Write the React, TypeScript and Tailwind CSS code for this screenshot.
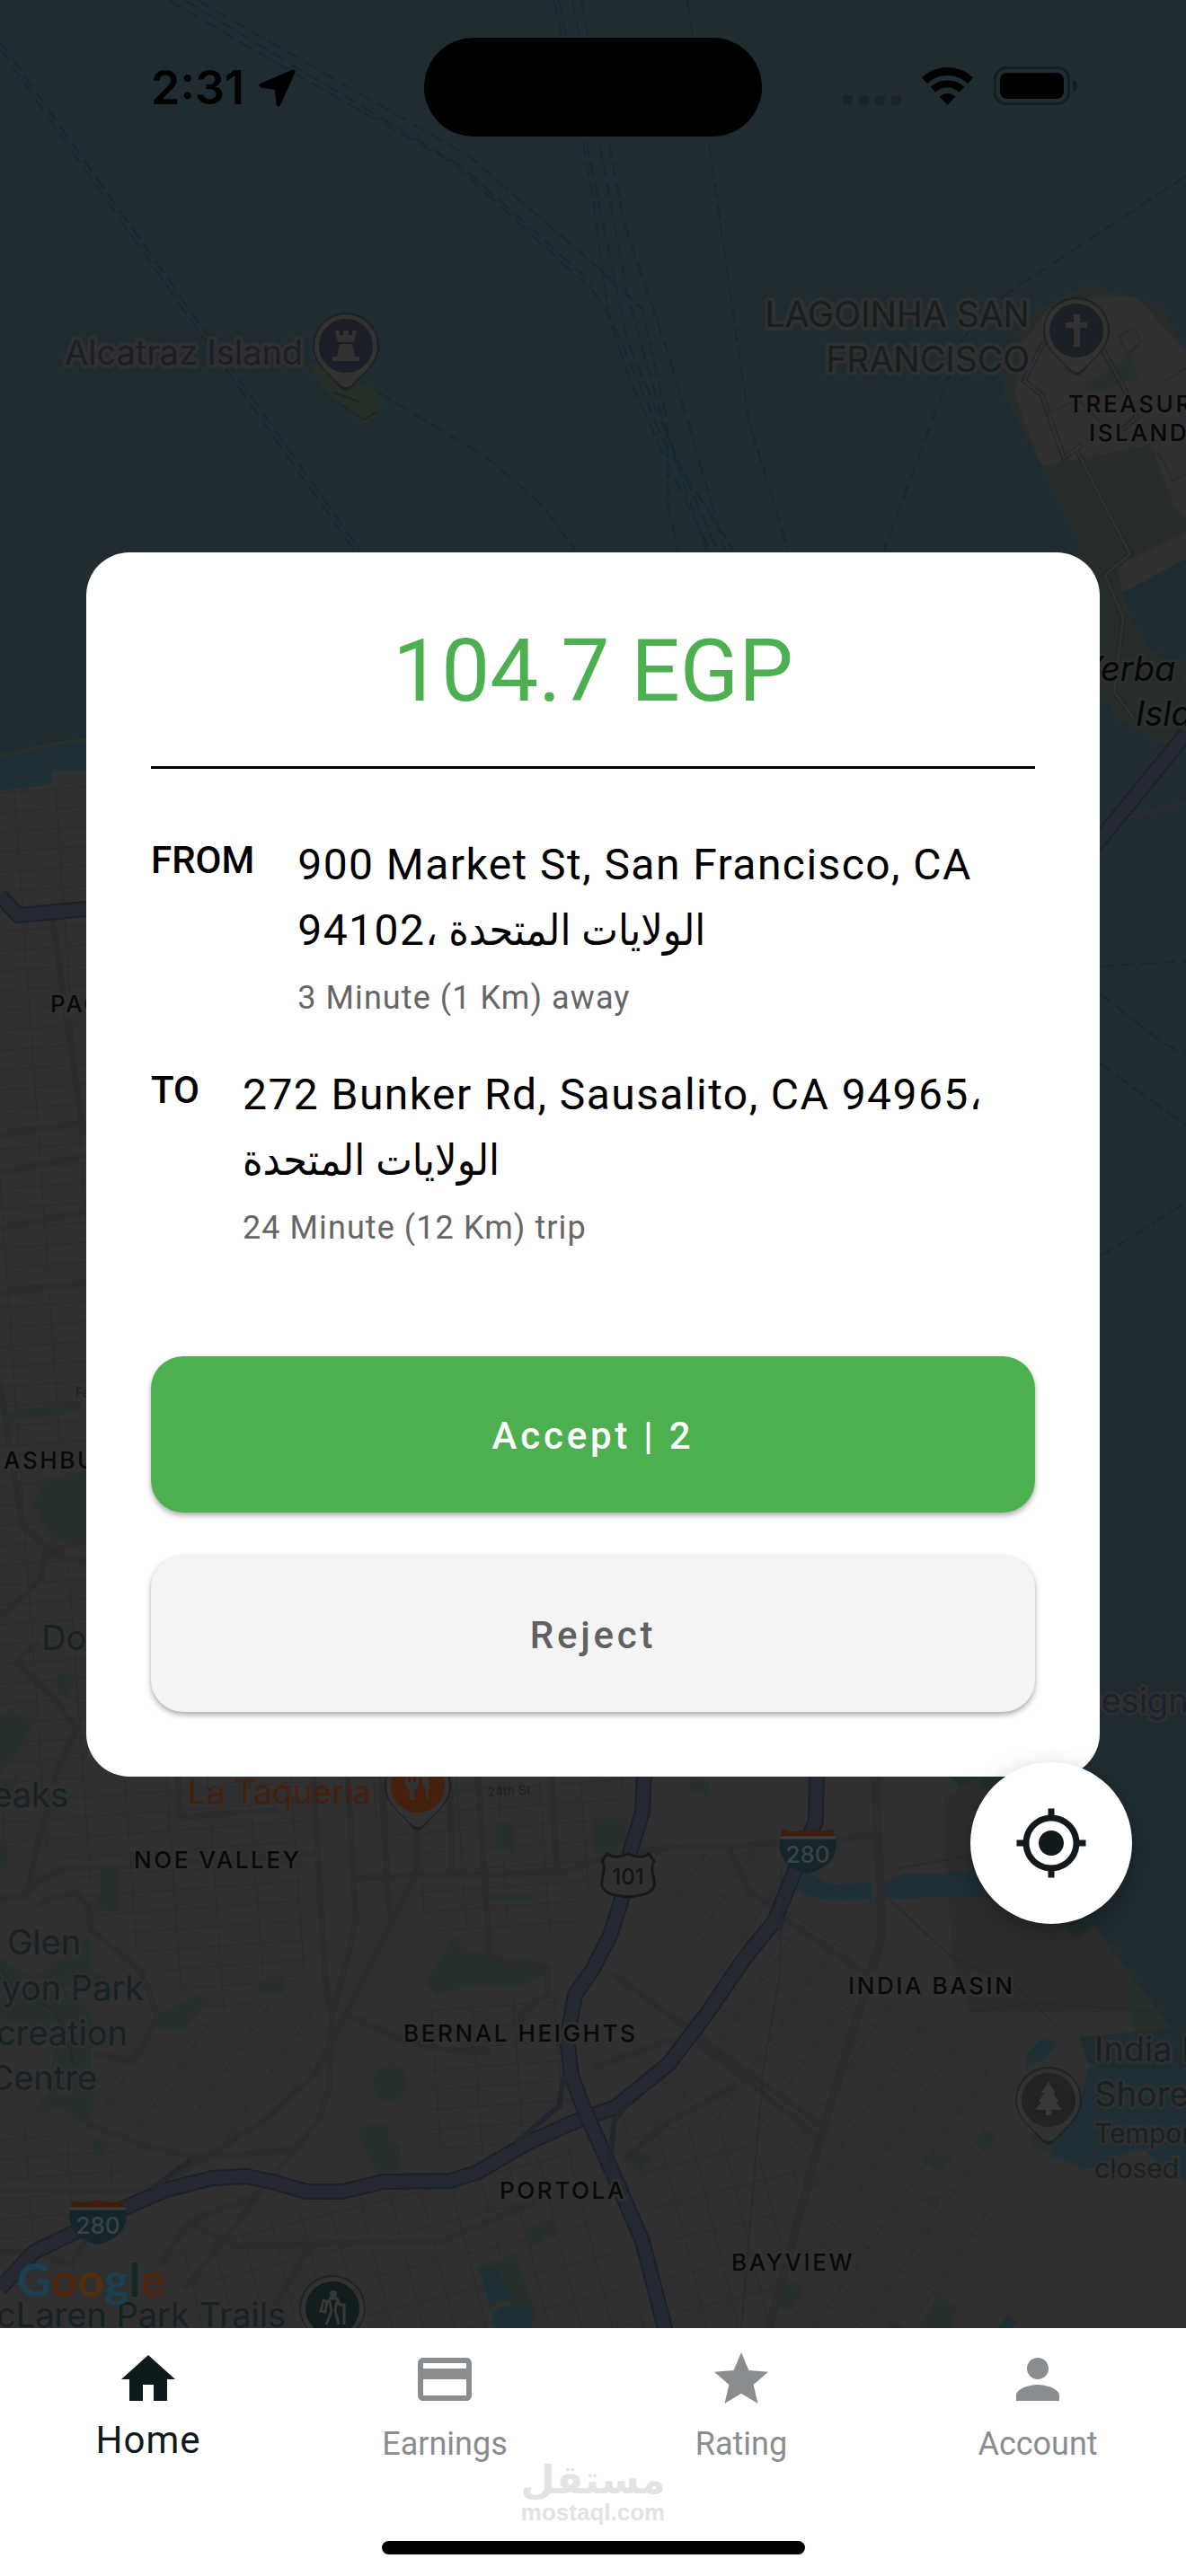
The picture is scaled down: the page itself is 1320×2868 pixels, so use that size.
import { useState } from 'react'
import { MdGpsFixed, MdHome, MdPayment, MdPerson, MdStar } from 'react-icons/md'
import type { IconType } from 'react-icons'

type Stop = {
  label:   string
  address: string
  detail:  string
}

type Tab = {
  id:    string
  label: string
  icon:  IconType
}

const STOPS: Stop[] = [
  { label: 'FROM', address: '900 Market St, San Francisco, CA 94102، الولايات المتحدة', detail: '3 Minute (1 Km) away' },
  { label: 'TO',   address: '272 Bunker Rd, Sausalito, CA 94965، الولايات المتحدة',     detail: '24 Minute (12 Km) trip' },
]

const TABS: Tab[] = [
  { id: 'home',     label: 'Home',     icon: MdHome },
  { id: 'earnings', label: 'Earnings', icon: MdPayment },
  { id: 'rating',   label: 'Rating',   icon: MdStar },
  { id: 'account',  label: 'Account',  icon: MdPerson },
]

const FERRY_LINES = [
  '0,46 229,370 400,612',
  '0,54 225,374 394,612',
  '187,0 337,87 505,182 660,324 676,348 700,420 740,510 790,612',
  '205,0 512,184 660,316',
  '219,0 522,174 660,293 715,344 742,467 744,569 755,612',
  '617,0 648,152 660,221 677,348 740,494 816,612',
  '622,0 655,170 698,380 798,612',
  '637,0 666,152 698,328 740,475 786,612',
  '647,0 677,154 694,245 744,395 807,612',
  '765,0 788,152 833,467 877,612',
  '421,437 543,510 602,561 640,612',
  '1320,196 1119,328 1072,376 984,612',
  '1224,1076 1320,1070',
  '1224,1106 1295,1162 1320,1174',
  '1224,1184 1320,1253',
  '1224,1399 1320,1339',
]

const ROADS = [
  '349,1978 358,2144 364,2221 370,2246',
  '387,1978 396,2136 389,2172 370,2242 366,2278 349,2311 295,2360 231,2401 168,2438',
  '463,2033 463,2087 436,2140 385,2242 368,2278 366,2327 354,2360 328,2393 248,2495 206,2548',
  '394,2091 631,2084 660,2072 727,2059 870,2052 976,2043',
  '0,2115 27,2111 42,2095 76,2078 143,2078 350,2064',
  '42,2119 84,2107 99,2123 101,2148 156,2193 175,2242 168,2262 147,2295 105,2287',
  '63,1978 53,2013 42,2054 29,2111',
  '97,2364 160,2389 223,2403 328,2393',
  '0,2438 160,2438',
  '0,2507 40,2507 78,2522 98,2490',
  '290,2442 210,2474 177,2523',
  '210,2474 261,2501 492,2495 598,2450',
  '345,2500 305,2570',
  '198,1978 200,2023 310,2015',
  '425,1978 432,2120 437,2140',
  '500,1978 503,2087',
  '532,1978 545,2180 610,2190 610,2220 580,2240 580,2262',
  '614,1978 620,2084',
  '385,2242 445,2270 490,2282 545,2284',
  '812,2059 833,2105 875,2137 963,2197',
  '681,2197 769,2261 921,2371',
  '769,2268 915,2383',
  '660,2302 757,2268',
  '694,2403 748,2360 820,2321',
  '58,1020 93,1264',
  '0,1264 96,1249',
  '0,1305 96,1287',
  '0,1367 96,1349',
  '0,1440 96,1428',
  '0,1540 25,1700 60,1727 96,1715',
  '96,1740 50,1728 45,1760 0,1800',
  '42,1828 18,1850 60,1890 85,1925 60,1978',
]

const HIGHWAYS = [
  '0,2548 38,2507 84,2485 139,2458 185,2438 236,2425 274,2423 303,2429 341,2440 381,2440 427,2429 501,2428 530,2419 589,2385 640,2362 685,2346 744,2298 786,2243 828,2181 862,2139 883,2087 908,2027 909,1970',
  '717,1970 715,2018 702,2059 692,2114 679,2155 660,2192 640,2221 631,2270 636,2311 650,2348 685,2426 715,2495 742,2600',
  '0,997 20,1019 96,1012',
  '1210,952 1320,817',
]

const PARKS = [
  '507,2154 516,2170 543,2172 551,2180 589,2180 610,2197 577,2213 526,2209 486,2221 474,2209 488,2184',
  '408,2363 431,2363 433,2385 446,2387 444,2417 421,2419 398,2376',
  '288,2203 318,2200 316,2219 288,2218',
  '112,2080 131,2080 131,2128 103,2127 112,2111',
  '177,2242 219,2221 234,2227 206,2258 173,2260',
  '0,2180 38,2201 67,2180 101,2156 101,2193 118,2201 72,2213 101,2242 103,2352 93,2368 72,2348 38,2352 55,2327 59,2282 0,2246',
  '553,2029 572,2029 572,2062 553,2062',
  '543,2109 591,2106 591,2116 543,2117',
  '585,2480 615,2470 620,2492 606,2488 604,2496 590,2500',
  '528,2524 573,2509 598,2584 560,2560',
  '104,2378 120,2384 114,2400 104,2398',
  '0,1978 20,1978 8,2010 0,2014',
  '0,2050 9,2060 8,2078 0,2080',
  '1251,2188 1304,2259 1260,2263',
  '1085,2385 1096,2373 1107,2380 1098,2396',
  '1024,2403 1062,2399 1043,2419',
  '1024,2449 1046,2442 1045,2463',
  '697,2405 708,2394 725,2403 713,2419',
  '866,2568 875,2539 894,2550 879,2575',
  '1018,2600 1043,2557 1066,2568 1056,2600',
  '660,2025 698,2025 696,2050 676,2068 660,2060',
  '768,1978 790,1984 788,2000 768,1994',
  '5,1572 90,1560 90,1571 5,1583',
  '37,1676 50,1646 96,1638 96,1712 60,1715',
  '64,1863 83,1866 76,1892 64,1884',
  '0,1910 14,1903 36,1920 24,1944 0,1974',
  '1150,2360 1180,2390 1172,2404 1148,2386',
]

const WATERS = [
  '894,2082 925,2098 971,2096 971,2114 925,2117 883,2105',
  '984,2096 1005,2087 1085,2084 1110,2110 984,2114',
  '1161,2268 1175,2275 1165,2291 1142,2302 1144,2286',
  '1212,2300 1320,2304 1320,2430 1270,2392 1210,2415 1172,2400 1185,2360 1205,2330',
  '534,2527 551,2525 560,2542 575,2556 545,2569',
  '547,2576 560,2568 589,2566 593,2600 551,2600',
  '990,2592 988,2585 1005,2592',
  '1110,2592 1122,2577 1132,2586 1126,2592',
]

const area = 'fill-[#162226] stroke-[#303030] stroke-[6px] text-[38px] [paint-order:stroke] [stroke-linejoin:round]'
const district = 'fill-[#08090a] stroke-[#303030] stroke-[6px] text-[26px] font-medium tracking-widest [paint-order:stroke] [stroke-linejoin:round]'

function Pin({ x, y, fill, children }: { x: number; y: number; fill: string; children: React.ReactNode }) {
  return (
    <g transform={`translate(${x} ${y})`}>
      <path d="M0 50C-5 50-9 44-14 38C-24 28-37 17-37 0A37 37 0 0 1 37 0C37 17 24 28 14 38C9 44 5 50 0 50Z" fill="#171b1d" opacity=".6" />
      <path d="M0 46C-5 46-9 41-14 36C-23 27-35 17-35 0A35 35 0 0 1 35 0C35 17 23 27 14 36C9 41 5 46 0 46Z" fill="#323232" />
      <circle r="30" fill={fill} />
      {children}
    </g>
  )
}

function InterstateShield({ x, y, route }: { x: number; y: number; route: string }) {
  return (
    <g transform={`translate(${x} ${y})`}>
      <path d="M-31 11V14C-34 30-24 44 0 50C24 44 34 30 31 14V11Z" fill="#14262c" />
      <path d="M-30 9L-28 0C-20 5-10 3 0 0C10 3 20 5 28 0L30 9Z" fill="#3f1d0c" />
      <path d="M-31 10H31" stroke="#3a3c3d" strokeWidth="3" />
      <text y="38" textAnchor="middle" className="fill-[#3a4346] text-[26px] font-medium">{route}</text>
    </g>
  )
}

function CityMap() {
  return (
    <svg
      viewBox="0 0 1320 2592"
      preserveAspectRatio="xMidYMid slice"
      aria-label="Map of San Francisco"
      className="absolute inset-0 size-full font-[Inter,sans-serif]"
    >
      <defs>
        <pattern id="blocks" width="46" height="22" patternUnits="userSpaceOnUse" patternTransform="rotate(-4)">
          <path d="M0 0H46M0 0V22" stroke="#2a2a2b" strokeWidth="2" fill="none" />
        </pattern>
        <pattern id="diagonal" width="44" height="26" patternUnits="userSpaceOnUse" patternTransform="rotate(34)">
          <path d="M0 0H44M0 0V26" stroke="#2a2a2b" strokeWidth="2" fill="none" />
        </pattern>
        <pattern id="slanted" width="34" height="40" patternUnits="userSpaceOnUse" patternTransform="rotate(-14)">
          <path d="M0 0H34M0 0V40" stroke="#2a2a2b" strokeWidth="2" fill="none" />
        </pattern>
      </defs>

      <rect width="1320" height="2592" fill="#1f2c31" />
      <path d="M0 838L40 832L96 824V872L0 880Z" fill="#1e2f37" />
      <path d="M0 842L60 828L96 824" stroke="#2b302c" strokeWidth="4" fill="none" />

      {/* mainland */}
      <path
        d="M0 880L58 873V858H96L600 900L1050 1400L1058 1978L1068 1990L1190 2150L1200 2157L1218 2144L1304 2259L1201 2268L1211 2298L1258 2307L1250 2316L1320 2302V2592H0Z"
        fill="#303030"
      />
      <path d="M1050 2000L1090 1978L1190 2150L1200 2157L1218 2144L1251 2190L1258 2240L1080 2240L1060 2180Z" fill="#2d2d2d" />
      <path d="M0 880L96 872V1978L340 1978V2200L240 2250L110 2130L60 2060L0 2060Z" fill="url(#blocks)" />
      <path d="M380 1978H700L640 2150L480 2150L440 2060Z" fill="url(#blocks)" />
      <path d="M480 2225H620L640 2340L540 2400L470 2390Z" fill="url(#blocks)" />
      <path d="M110 2290L340 2210L360 2300L240 2400L120 2370Z" fill="url(#diagonal)" />
      <path d="M0 2360L150 2400L100 2470L0 2500Z" fill="url(#blocks)" />
      <path d="M200 2500L400 2445L640 2390L720 2592H200Z" fill="url(#slanted)" />
      <path d="M720 2060L870 2060L960 2200L900 2400L720 2330L800 2200Z" fill="url(#diagonal)" />
      <path d="M690 2350L900 2400L850 2592H760Z" fill="url(#slanted)" />
      <path d="M960 2200L1100 2280L1110 2480L1010 2592H870Z" fill="url(#diagonal)" />

      {PARKS.map(points => <polygon key={points} points={points} fill="#27302b" />)}
      <ellipse cx="434" cy="2319" rx="19" ry="22" fill="#27302b" />
      {WATERS.map(points => <polygon key={points} points={points} fill="#1e2f37" />)}
      <path d="M0 2190C12 2215 30 2225 50 2232C70 2245 78 2270 81 2300" stroke="#1c2d36" strokeWidth="2" fill="none" />

      {/* Treasure Island and Yerba Buena */}
      <path
        d="M1115 433L1136 368L1157 344L1209 316L1291 340L1320 389V623L1249 660L1262 697L1279 720L1304 737L1320 733V832L1291 828L1245 800L1200 740V600Z"
        fill="#272e2a"
      />
      <path d="M1130 440L1136 385L1165 345L1209 332L1265 330L1320 392V578L1305 560L1282 495L1159 519Z" fill="#303030" />
      <path d="M1243 630L1320 592V622L1249 660Z" fill="#303030" />
      <path d="M1205 430L1258 395L1268 420L1212 440Z" fill="#27302b" />
      <path d="M1162 380L1140 424L1160 440L1184 510L1204 495M1198 500L1228 560L1258 617L1230 640L1250 688L1240 770L1262 800M1225 385L1250 430L1265 465L1235 490" stroke="#24262e" strokeWidth="6" fill="none" />
      <path d="M1162 380L1140 424L1160 440L1184 510L1204 495M1198 500L1228 560L1258 617L1230 640L1250 688L1240 770L1262 800M1225 385L1250 430L1265 465L1235 490" stroke="#303030" strokeWidth="3" fill="none" />
      <path d="M1245 375L1262 365L1270 380L1255 395ZM1165 460L1200 445L1225 470M1295 425L1320 410M1287 500L1305 535L1320 528" stroke="#2a2a2b" strokeWidth="2" fill="none" />
      <path d="M1247 913L1320 893" stroke="#2a2c2d" strokeWidth="3" />

      {/* Alcatraz */}
      <path d="M345 405L350 418L362 435L375 447L406 472L421 461L427 447L417 433L400 425L360 400Z" fill="#272f29" />
      <path d="M373 437L401 448M378 449L405 467L421 458" stroke="#1e2524" strokeWidth="2" fill="none" />

      {FERRY_LINES.map(points => (
        <polyline key={points} points={points} fill="none" stroke="#162730" strokeWidth="2" strokeDasharray="16 7" />
      ))}
      {ROADS.map(points => (
        <polyline key={points} points={points} fill="none" stroke="#2b2c2e" strokeWidth="7" strokeLinejoin="round" />
      ))}
      <path d="M974 1978L979 2090L982 2155L913 2380L854 2600" stroke="#2b2c2e" strokeWidth="10" fill="none" />
      <path d="M870 2080L868 2200L850 2300L825 2592M985 2110L1060 2180L1130 2210L1170 2250M1000 2080L1085 2065M1080 2240L1150 2230L1300 2240" stroke="#292a2b" strokeWidth="2" fill="none" />
      {HIGHWAYS.map(points => (
        <g key={points} fill="none" strokeLinejoin="round">
          <polyline points={points} stroke="#1c2028" strokeWidth="18" />
          <polyline points={points} stroke="#242833" strokeWidth="14" />
        </g>
      ))}
      <path d="M628 2310L622 2345L575 2385M676 2425L684 2360L700 2340M168 2438L212 2405M868 2150L874 2110" stroke="#22262f" strokeWidth="6" fill="none" />

      <text x="72" y="406" className="fill-[#1c1f29] stroke-[#303030] stroke-[8px] text-[38px] [paint-order:stroke] [stroke-linejoin:round]">Alcatraz Island</text>
      <g textAnchor="end" className="fill-[#151e21] stroke-[#303030] stroke-[8px] text-[39px] [paint-order:stroke] [stroke-linejoin:round]">
        <text x="1146" y="364">LAGOINHA SAN</text>
        <text x="1146" y="414">FRANCISCO</text>
      </g>
      <g className={district}>
        <text x="1189" y="459">TREASURE</text>
        <text x="1212" y="491">ISLAND</text>
        <text x="56" y="1127">PACIFIC</text>
        <text x="4" y="1635">ASHBURY</text>
        <text x="149" y="2080">NOE VALLEY</text>
        <text x="449" y="2273">BERNAL HEIGHTS</text>
        <text x="556" y="2448">PORTOLA</text>
        <text x="944" y="2220">INDIA BASIN</text>
        <text x="814" y="2528">BAYVIEW</text>
      </g>
      <g className="fill-[#060707] stroke-[#2c302d] stroke-[6px] text-[38px] italic [paint-order:stroke]">
        <text x="1202" y="758">Yerba Buena</text>
        <text x="1264" y="808">Island</text>
      </g>
      <g className={area}>
        <text x="46" y="1837">Dolores</text>
        <text x="8" y="2176">Glen</text>
        <g textAnchor="end">
          <text x="76" y="2012">Peaks</text>
          <text x="160" y="2227">Canyon Park</text>
          <text x="142" y="2277">Recreation</text>
          <text x="108" y="2327">Centre</text>
          <text x="318" y="2591">McLaren Park Trails</text>
        </g>
        <text x="1198" y="1907" className="fill-[#1c2230]">Design</text>
        <text x="1218" y="2295">India Basin</text>
        <text x="1218" y="2345">Shoreline</text>
      </g>
      <g className="fill-[#162226] stroke-[#303030] stroke-[6px] text-[30px] [paint-order:stroke]">
        <text x="1218" y="2386">Temporarily</text>
        <text x="1218" y="2425">closed</text>
      </g>
      <text x="209" y="2008" className="fill-[#45200d] text-[37px]">La Taqueria</text>
      <g className="fill-[#1c202a] text-[14px]">
        <text x="543" y="2000" transform="rotate(-3 543 2000)">24th St</text>
        <text x="84" y="1556">Fell St</text>
      </g>

      <Pin x={385} y={385} fill="#1c1e27">
        <path d="M-12-17H-7V-12H-3V-17H3V-12H7V-17H12L9-4H-9ZM-7-2H7L10 12H15V17H-15V12H-10Z" fill="#323232" />
      </Pin>
      <Pin x={1198} y={368} fill="#1a2025">
        <path d="M-3-18H4V-9H12V-3H4V18H-3V-3H-12V-9H-3Z" fill="#323232" />
      </Pin>
      <Pin x={465} y={1988} fill="#45200d">
        <path d="M-14-14V-4C-14 2-10 4-9 5V16H-4V5C-1 4 1 2 1-4V-14H-2V-4H-5V-14H-8V-4H-11V-14ZM5 2V-10C5-13 8-15 12-15V16H9V2Z" fill="#323232" />
      </Pin>
      <Pin x={1167} y={2338} fill="#232323">
        <path d="M0-20L8-8H5L11 2H8L15 11H3V17H-3V11H-15L-8 2H-11L-5-8H-8Z" fill="#383838" />
      </Pin>
      <Pin x={370} y={2570} fill="#121d1e">
        <circle cx="1" cy="-16" r="4" fill="#383838" />
        <path d="M-4-11H5L8-4H13V18M-4-10L-1 3L-7 18M5-8L3 3L7 18M-10-9L-13 3L-8 4L-6-8Z" stroke="#383838" strokeWidth="3" fill="none" />
      </Pin>

      <InterstateShield x={109} y={2449} route="280" />
      <InterstateShield x={899} y={2036} route="280" />
      <path d="M676 2064C682 2069 690 2068 699 2064C708 2068 716 2069 722 2064L728 2072C722 2080 730 2092 728 2100C724 2110 712 2110 699 2112C686 2110 674 2110 670 2100C668 2092 676 2080 670 2072Z" fill="#303030" stroke="#14191b" strokeWidth="3" />
      <text x="699" y="2098" textAnchor="middle" className="fill-[#111314] text-[24px] font-medium">101</text>

      <text x="19" y="2557" className="text-[52px] font-[Lato,sans-serif] font-bold">
        <tspan className="fill-[#1c4052]">G</tspan>
        <tspan className="fill-[#52250f]">o</tspan>
        <tspan className="fill-[#52300f]">o</tspan>
        <tspan className="fill-[#1c4052]">g</tspan>
        <tspan className="fill-[#142728]">l</tspan>
        <tspan className="fill-[#52250f]">e</tspan>
      </text>
    </svg>
  )
}

function StatusBar() {
  return (
    <header className="relative z-10 grid grid-cols-[1fr_auto_1fr] items-start px-30 pt-[42px]">
      <div className="flex items-center gap-4 pl-12 pt-7 text-black">
        <time className="font-[Inter,sans-serif] text-[52px] leading-14 font-semibold">2:31</time>
        <svg viewBox="0 0 44 44" className="size-[42px]" aria-hidden="true">
          <path d="M40 3L3 19L21 22L23 41Z" fill="black" stroke="black" strokeWidth="5" strokeLinejoin="round" />
        </svg>
      </div>
      <div className="h-[110px] w-[376px] rounded-full bg-black" />
      <div className="flex items-end justify-end gap-[23px] pt-8">
        <div className="flex gap-[7px]">
          {[0, 1, 2, 3].map(i => <span key={i} className="size-[11px] rounded-sm bg-[#1c212c]" />)}
        </div>
        <svg viewBox="0 0 57 42" className="h-[42px] w-[57px]" aria-label="Wi-Fi">
          <path d="M2.9 14.6A37.5 37.5 0 0 1 54.1 14.6" stroke="black" strokeWidth="9" fill="none" />
          <path d="M12.5 24.8A23.5 23.5 0 0 1 44.5 24.8" stroke="black" strokeWidth="8" fill="none" />
          <path d="M19.6 32.5A13 13 0 0 1 37.4 32.5L28.5 42Z" fill="black" />
        </svg>
        <svg viewBox="0 0 94 43" className="h-[43px] w-[94px]" aria-label="Battery">
          <rect x="1.5" y="1.5" width="82" height="40" rx="12" fill="none" stroke="#141d20" strokeWidth="3" />
          <rect x="7" y="7" width="71" height="29" rx="8" fill="black" />
          <path d="M88 15C92 16 93 19 93 21.500C93 24 92 27 88 28Z" fill="#141d20" />
        </svg>
      </div>
    </header>
  )
}

function StopRow({ stop }: { stop: Stop }) {
  return (
    <div className="flex gap-12">
      <dt className="text-[42px] leading-16 font-medium">{stop.label}</dt>
      <dd className="flex-1">
        <p className="text-5xl leading-[73px] tracking-[0.03em]">{stop.address}</p>
        <p className="mt-3 text-4xl leading-[54px] tracking-[0.03em] text-[#666666]">{stop.detail}</p>
      </dd>
    </div>
  )
}

function TripDialog() {
  return (
    <section role="dialog" aria-label="Trip request" className="relative z-10 w-full rounded-[48px] bg-white p-[72px] text-black">
      <h1 className="border-b-3 border-black pb-[46px] text-center text-8xl leading-[120px] font-normal text-[#4caf50]">
        104.7 EGP
      </h1>
      <dl className="mt-[70px] flex flex-col gap-11">
        {STOPS.map(stop => <StopRow key={stop.label} stop={stop} />)}
      </dl>
      <div className="mt-29 flex flex-col gap-12">
        <button type="button" className="h-[174px] rounded-[36px] bg-[#4caf50] pt-1 text-[42px] font-medium tracking-[0.09em] text-white shadow-[0_3px_6px_rgba(0,0,0,0.35)]">
          Accept | 2
        </button>
        <button type="button" className="h-[174px] rounded-[36px] bg-[#f4f4f4] pt-1 text-[42px] font-medium tracking-[0.09em] text-[#616161] shadow-[0_3px_6px_rgba(0,0,0,0.35)]">
          Reject
        </button>
      </div>
    </section>
  )
}

export default function App() {
  const [active, setActive] = useState('home')

  return (
    <div className="flex min-h-screen flex-col bg-white font-[Roboto,'DejaVu_Sans_Condensed','DejaVu_Sans',sans-serif]">
      <main className="relative flex flex-1 flex-col overflow-hidden">
        <CityMap />
        <StatusBar />
        {/* bottom padding mirrors the status bar so the dialog sits in the middle */}
        <div className="flex flex-1 items-center px-24 pb-[152px]">
          <TripDialog />
        </div>
        <button
          type="button"
          aria-label="Centre on my location"
          className="absolute right-[60px] bottom-[450px] z-20 flex size-[180px] items-center justify-center rounded-full bg-white text-[#101a1d] shadow-[0_12px_30px_rgba(0,0,0,0.3)]"
        >
          <MdGpsFixed className="size-21" />
        </button>
      </main>

      <footer className="flex h-[276px] shrink-0 flex-col items-center bg-white">
        <nav className="grid w-full grid-cols-4 items-start pt-[21px]">
          {TABS.map(({ id, label, icon: Icon }) => (
            <button
              key={id}
              type="button"
              onClick={() => setActive(id)}
              className={active === id
                ? 'flex flex-col items-center gap-2 text-[42px] leading-12 tracking-[1px] text-[#0f1a1d]'
                : 'flex flex-col items-center gap-3 text-4xl leading-12 text-[#8a8d8f]'}
            >
              <Icon className="size-18" />
              {label}
            </button>
          ))}
        </nav>
        <div className="flex flex-col items-center text-[#e3e3e3]">
          <span className="h-9 font-['DejaVu_Sans',sans-serif] text-[44px] leading-8 font-bold">مستقل</span>
          <span className="font-['Liberation_Sans',sans-serif] text-[26px] leading-8 font-bold">mostaql.com</span>
        </div>
        <div className="mt-auto mb-6 h-[15px] w-[471px] rounded-full bg-black" />
      </footer>
    </div>
  )
}
